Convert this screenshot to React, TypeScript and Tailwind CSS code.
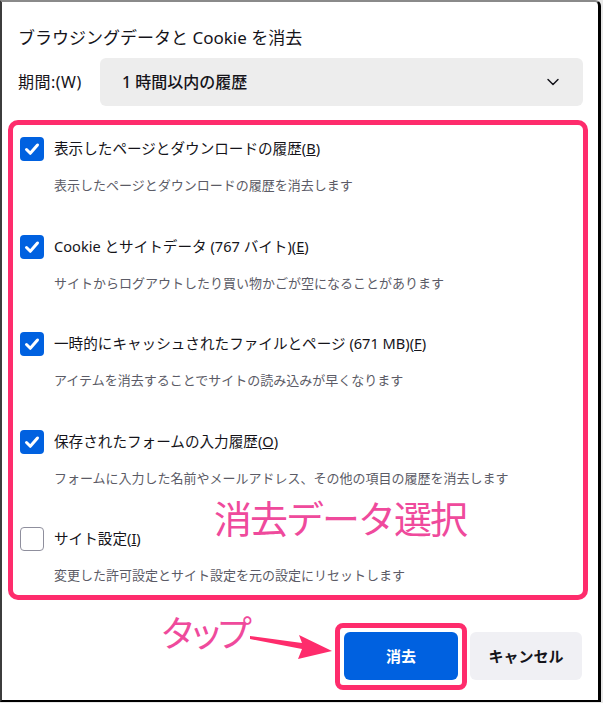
import { ChevronDown } from 'lucide-react';

const items = [
  { label: '表示したページとダウンロードの履歴', key: 'B', desc: '表示したページとダウンロードの履歴を消去します', checked: true },
  { label: 'Cookie とサイトデータ (767 バイト)', key: 'E', desc: 'サイトからログアウトしたり買い物かごが空になることがあります', checked: true },
  { label: '一時的にキャッシュされたファイルとページ (671 MB)', key: 'F', desc: 'アイテムを消去することでサイトの読み込みが早くなります', checked: true },
  { label: '保存されたフォームの入力履歴', key: 'O', desc: 'フォームに入力した名前やメールアドレス、その他の項目の履歴を消去します', checked: true },
  { label: 'サイト設定', key: 'I', desc: '変更した許可設定とサイト設定を元の設定にリセットします', checked: false },
];

function Checkbox({ checked }: { checked: boolean }) {
  if (!checked) {
    return <div className="w-6 h-6 rounded-[4px] border border-[#8f8f9d] bg-white shrink-0" />;
  }
  return (
    <div className="w-6 h-6 rounded-[4px] bg-[#0061e0] flex items-center justify-center shrink-0">
      <svg width="24" height="24" viewBox="0 0 24 24" fill="none">
        <path d="M6.5 12.5l3.8 3.8 7.2-8.3" stroke="white" strokeWidth="3" strokeLinecap="round" strokeLinejoin="round" />
      </svg>
    </div>
  );
}

export default function App() {
  return (
    <div
      className="relative w-[603px] h-[703px] bg-[#e8e8e8] text-[#15141a]"
      style={{ fontFamily: '"Noto Sans", "Noto Sans CJK JP", sans-serif' }}
    >
      <div className="w-[601px] h-[702px] bg-white border-l-2 border-l-[#3c3c3c] border-t-2 border-t-[#8a8a8a] border-r-[3px] border-r-black border-b-2 border-b-black rounded-tr-[6px] flex flex-col">
        <h1 className="pt-6 pl-4 text-[17px] leading-6 font-normal">ブラウジングデータと Cookie を消去</h1>

        <div className="mt-2 pl-4 flex items-center">
          <span className="text-[16px] tracking-[0.5px] w-[82px]">期間:(W)</span>
          <div className="w-[483px] h-12 rounded-md bg-[#ededed] flex items-center justify-between pl-[22px] pr-[20px]">
            <span className="text-[16px] font-medium">1 時間以内の履歴</span>
            <ChevronDown className="w-5 h-5" strokeWidth={1.75} />
          </div>
        </div>

        <div className="mt-[14px] ml-[6px] w-[580px] h-[480px] border-[5px] border-[#fe2c6c] rounded-[10px] pt-[12px] pl-[7px]">
          {items.map((it) => (
            <div key={it.key} className="h-[97.5px]">
              <div className="flex items-center gap-[10px] h-6">
                <Checkbox checked={it.checked} />
                <span className="text-[14.6px]">
                  {it.label}(<u>{it.key}</u>)
                </span>
              </div>
              <p className="mt-[14px] pl-[34px] text-[13px] leading-5 text-[#5b5b66]">{it.desc}</p>
            </div>
          ))}
        </div>

        <div className="mt-[23px] pr-[16px] flex justify-end items-start gap-[3px]">
          <div className="border-[5px] border-[#fe2c6c] rounded-[8px] p-[4px] pb-[5px]">
            <button className="w-[114px] h-12 rounded-md bg-[#0061e0] text-white text-[15px] font-bold">消去</button>
          </div>
          <button className="mt-[9px] w-[112px] h-12 rounded-md bg-[#f0f0f4] text-[15px] font-bold">キャンセル</button>
        </div>
      </div>

      <div className="absolute left-[214px] top-[499px] text-[38px] leading-none tracking-[-2px] text-[#ef4a9c] font-normal">
        消去データ選択
      </div>
      <div className="absolute left-[160px] top-[616px] text-[36px] leading-none tracking-[-8px] text-[#ef4a9c] font-normal">
        タップ
      </div>
      <svg className="absolute left-[248px] top-[630px]" width="88" height="34" viewBox="0 0 88 34">
        <polygon points="2,6 54,13 51,5 84,21 50,29 54,19 2,9" fill="#fe2c6c" />
      </svg>
    </div>
  );
}
